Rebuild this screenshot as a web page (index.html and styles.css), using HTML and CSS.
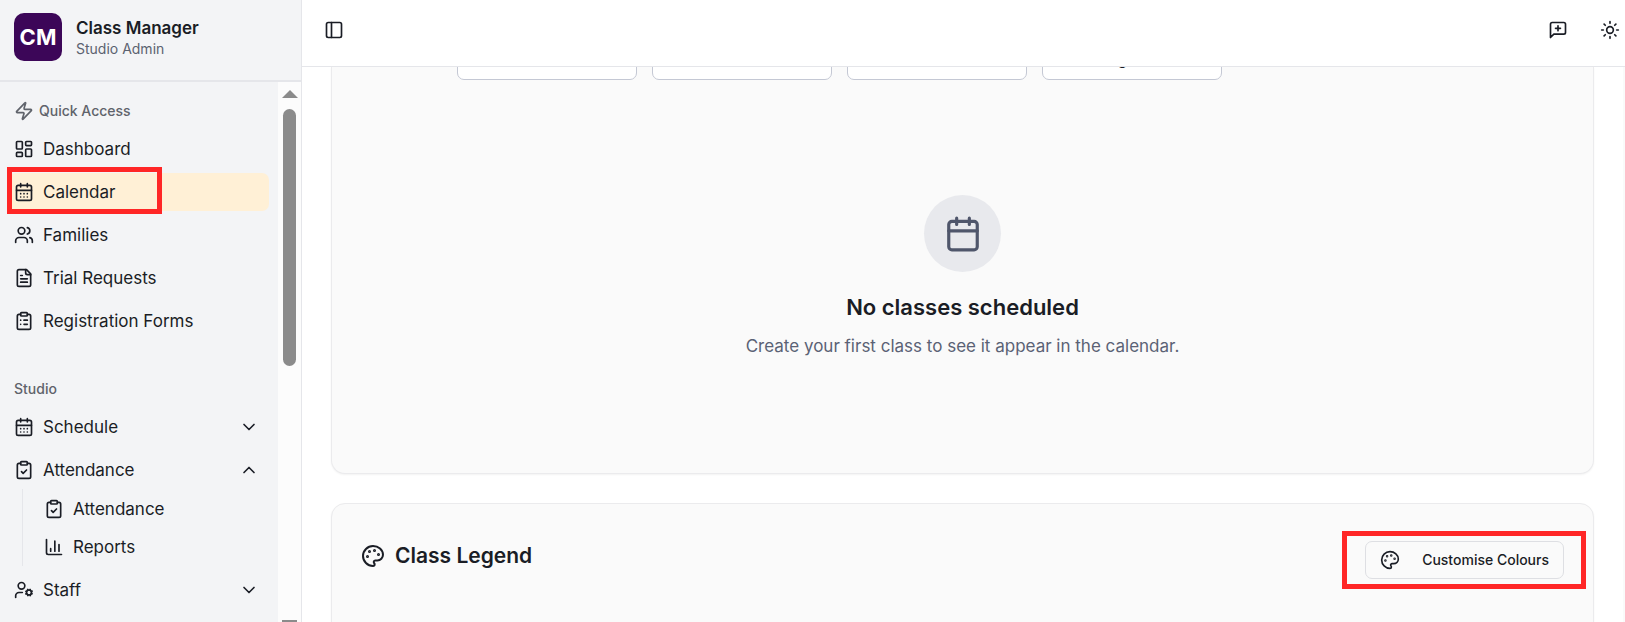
FILE: index.html
```html
<!DOCTYPE html>
<html lang="en">
<head>
<meta charset="utf-8">
<meta name="viewport" content="width=device-width, initial-scale=1">
<title>Class Manager</title>
<link rel="stylesheet" href="styles.css">
</head>
<body>
<svg class="sprite" aria-hidden="true">
  <symbol id="zap" viewBox="0 0 24 24"><path d="M4 14a1 1 0 0 1-.78-1.63l9.9-10.2a.5.5 0 0 1 .86.46l-1.92 6.02A1 1 0 0 0 13 10h7a1 1 0 0 1 .78 1.63l-9.9 10.2a.5.5 0 0 1-.86-.46l1.92-6.02A1 1 0 0 0 11 14z"/></symbol>
  <symbol id="dashboard" viewBox="0 0 24 24"><rect width="7" height="9" x="3" y="3" rx="1"/><rect width="7" height="5" x="14" y="3" rx="1"/><rect width="7" height="9" x="14" y="12" rx="1"/><rect width="7" height="5" x="3" y="16" rx="1"/></symbol>
  <symbol id="calendar" viewBox="0 0 24 24"><path d="M8 2v4M16 2v4M3 10h18"/><rect width="18" height="18" x="3" y="4" rx="2"/></symbol>
  <symbol id="calendar-days" viewBox="0 0 24 24"><path d="M8 2v4M16 2v4M3 10h18M8 14h.01M12 14h.01M16 14h.01M8 18h.01M12 18h.01M16 18h.01"/><rect width="18" height="18" x="3" y="4" rx="2"/></symbol>
  <symbol id="users" viewBox="0 0 24 24"><path d="M16 21v-2a4 4 0 0 0-4-4H6a4 4 0 0 0-4 4v2M22 21v-2a4 4 0 0 0-3-3.87M16 3.13a4 4 0 0 1 0 7.75"/><circle cx="9" cy="7" r="4"/></symbol>
  <symbol id="file-text" viewBox="0 0 24 24"><path d="M15 2H6a2 2 0 0 0-2 2v16a2 2 0 0 0 2 2h12a2 2 0 0 0 2-2V7Z"/><path d="M14 2v4a2 2 0 0 0 2 2h4M10 9H8M16 13H8M16 17H8"/></symbol>
  <symbol id="clipboard-list" viewBox="0 0 24 24"><rect width="8" height="4" x="8" y="2" rx="1"/><path d="M16 4h2a2 2 0 0 1 2 2v14a2 2 0 0 1-2 2H6a2 2 0 0 1-2-2V6a2 2 0 0 1 2-2h2M12 11h4M12 16h4M8 11h.01M8 16h.01"/></symbol>
  <symbol id="clipboard-check" viewBox="0 0 24 24"><rect width="8" height="4" x="8" y="2" rx="1"/><path d="M16 4h2a2 2 0 0 1 2 2v14a2 2 0 0 1-2 2H6a2 2 0 0 1-2-2V6a2 2 0 0 1 2-2h2M9 14l2 2 4-4"/></symbol>
  <symbol id="chart" viewBox="0 0 24 24"><path d="M3 3v16a2 2 0 0 0 2 2h16M18 17V9M13 17V5M8 17v-3"/></symbol>
  <symbol id="user-cog" viewBox="0 0 24 24"><path d="M10 15H6a4 4 0 0 0-4 4v2M14.3 16.6l1-.4M15.2 13.9l-.9-.3M16.6 18.7l.3-.9M19.1 12.2l.3-.9M19.6 18.7l-.4-1M16.8 12.3l-.4-1M20.7 13.8l1-.4M21.7 16.4l-.9-.3"/><circle cx="9" cy="7" r="4"/><circle cx="18" cy="15" r="3"/></symbol>
  <symbol id="chevron-down" viewBox="0 0 24 24"><path d="m6 9 6 6 6-6"/></symbol>
  <symbol id="chevron-up" viewBox="0 0 24 24"><path d="m18 15-6-6-6 6"/></symbol>
  <symbol id="panel-left" viewBox="0 0 24 24"><rect width="18" height="18" x="3" y="3" rx="2"/><path d="M9 3v18"/></symbol>
  <symbol id="message-plus" viewBox="0 0 24 24"><path d="M21 15a2 2 0 0 1-2 2H7l-4 4V5a2 2 0 0 1 2-2h14a2 2 0 0 1 2 2zM12 7v6M9 10h6"/></symbol>
  <symbol id="sun" viewBox="0 0 24 24"><circle cx="12" cy="12" r="4"/><path d="M12 2v2M12 20v2M4.93 4.93l1.41 1.41M17.66 17.66l1.41 1.41M2 12h2M20 12h2M6.34 17.66l-1.41 1.41M19.07 4.93l-1.41 1.41"/></symbol>
  <symbol id="palette" viewBox="0 0 24 24"><g fill="currentColor"><circle cx="13.5" cy="6.5" r=".5"/><circle cx="17.5" cy="10.5" r=".5"/><circle cx="8.5" cy="7.5" r=".5"/><circle cx="6.5" cy="12.5" r=".5"/></g><path d="M12 2C6.5 2 2 6.5 2 12s4.5 10 10 10c.926 0 1.648-.746 1.648-1.688 0-.437-.18-.835-.437-1.125-.29-.289-.438-.652-.438-1.125a1.64 1.64 0 0 1 1.668-1.668h1.996c3.051 0 5.555-2.503 5.555-5.554C21.965 6.012 17.461 2 12 2z"/></symbol>
</svg>

<div class="app">
  <aside class="sidebar">
    <div class="brand">
      <div class="brand-logo">CM</div>
      <div>
        <div class="brand-name">Class Manager</div>
        <div class="brand-role">Studio Admin</div>
      </div>
    </div>
    <div class="sidebar-body">
      <nav class="nav">
        <h2 class="nav-label"><svg class="icon"><use href="#zap"/></svg>Quick Access</h2>
        <ul class="nav-list">
          <li><a class="nav-item" href="#"><svg class="icon"><use href="#dashboard"/></svg>Dashboard</a></li>
          <li class="marked"><a class="nav-item active" href="#"><svg class="icon"><use href="#calendar-days"/></svg>Calendar</a><span class="marker marker-nav"></span></li>
          <li><a class="nav-item" href="#"><svg class="icon"><use href="#users"/></svg>Families</a></li>
          <li><a class="nav-item" href="#"><svg class="icon"><use href="#file-text"/></svg>Trial Requests</a></li>
          <li><a class="nav-item" href="#"><svg class="icon"><use href="#clipboard-list"/></svg>Registration Forms</a></li>
        </ul>
        <h2 class="nav-label nav-label-studio">Studio</h2>
        <ul class="nav-list">
          <li><button class="nav-item" type="button"><svg class="icon"><use href="#calendar-days"/></svg>Schedule<svg class="icon chevron"><use href="#chevron-down"/></svg></button></li>
          <li>
            <button class="nav-item" type="button" aria-expanded="true"><svg class="icon"><use href="#clipboard-check"/></svg>Attendance<svg class="icon chevron"><use href="#chevron-up"/></svg></button>
            <ul class="subnav">
              <li><a class="nav-item" href="#"><svg class="icon"><use href="#clipboard-check"/></svg>Attendance</a></li>
              <li><a class="nav-item" href="#"><svg class="icon"><use href="#chart"/></svg>Reports</a></li>
            </ul>
          </li>
          <li><button class="nav-item" type="button"><svg class="icon"><use href="#user-cog"/></svg>Staff<svg class="icon chevron"><use href="#chevron-down"/></svg></button></li>
        </ul>
      </nav>
      <div class="scrollbar" aria-hidden="true">
        <span class="arrow arrow-up"></span>
        <span class="thumb"></span>
        <span class="arrow arrow-down"></span>
      </div>
    </div>
  </aside>

  <div class="page">
    <header class="topbar">
      <button class="icon-button" type="button" aria-label="Toggle sidebar"><svg class="icon"><use href="#panel-left"/></svg></button>
      <div class="topbar-actions">
        <button class="icon-button" type="button" aria-label="Send feedback"><svg class="icon"><use href="#message-plus"/></svg></button>
        <button class="icon-button" type="button" aria-label="Toggle theme"><svg class="icon"><use href="#sun"/></svg></button>
      </div>
    </header>
    <main class="content">
      <section class="card card-calendar">
        <div class="days">
          <div class="day"></div>
          <div class="day"></div>
          <div class="day"></div>
          <div class="day">g</div>
        </div>
        <div class="empty">
          <div class="empty-icon"><svg class="icon"><use href="#calendar"/></svg></div>
          <h3 class="empty-title">No classes scheduled</h3>
          <p class="empty-text">Create your first class to see it appear in the calendar.</p>
        </div>
      </section>
      <section class="card card-legend">
        <h3 class="legend-title"><svg class="icon"><use href="#palette"/></svg>Class Legend</h3>
        <div class="marked">
          <button class="customise" type="button"><svg class="icon"><use href="#palette"/></svg>Customise Colours</button>
          <span class="marker marker-button"></span>
        </div>
      </section>
    </main>
  </div>
</div>
</body>
</html>
```
FILE: styles.css
```css
* {
  box-sizing: border-box;
}

body {
  margin: 0;
  font-family: Inter, "Liberation Sans", sans-serif;
  font-size: 17px;
  line-height: 24px;
  color: #1a1d25;
  background: #fff;
}

h2, h3, p, ul {
  margin: 0;
  padding: 0;
}

ul {
  list-style: none;
}

button {
  font: inherit;
  color: inherit;
  background: none;
  border: 0;
  padding: 0;
}

.sprite {
  display: none;
}

.icon {
  width: 20px;
  height: 20px;
  flex: none;
  fill: none;
  stroke: currentColor;
  stroke-width: 2;
  stroke-linecap: round;
  stroke-linejoin: round;
}

.app {
  display: flex;
  height: 100vh;
  overflow: hidden;
}

/* Sidebar */
.sidebar {
  width: 302px;
  flex: none;
  display: flex;
  flex-direction: column;
  background: #f3f4f6;
  border-right: 1px solid #e5e6ea;
}

.brand {
  display: flex;
  align-items: center;
  gap: 14px;
  padding: 13px 14px 19px;
  border-bottom: 2px solid #e5e6ea;
}

.brand-logo {
  display: grid;
  place-items: center;
  width: 48px;
  height: 48px;
  border-radius: 10px;
  background: #3c0658;
  color: #fff;
  font-size: 22px;
  font-weight: 700;
}

.brand-name {
  padding-top: 2px;
  font-weight: 600;
  line-height: 22px;
}

.brand-role {
  font-size: 14px;
  line-height: 20px;
  color: #5b6270;
}

.sidebar-body {
  flex: 1;
  min-height: 0;
  display: flex;
}

.nav {
  flex: 1;
  padding: 10px 9px;
  overflow: hidden;
}

.nav-label {
  display: flex;
  align-items: center;
  gap: 5px;
  height: 38px;
  padding: 0 5px;
  font-size: 14px;
  font-weight: 500;
  color: #5f636b;
}

.nav-label-studio {
  margin-top: 30px;
}

.nav-list {
  display: flex;
  flex-direction: column;
  gap: 5px;
}

.nav-item {
  display: flex;
  align-items: center;
  gap: 9px;
  width: 100%;
  height: 38px;
  padding: 0 5px;
  border-radius: 7px;
  color: inherit;
  text-decoration: none;
}

.nav-item.active {
  background: #fff0d6;
}

.chevron {
  margin-left: auto;
  margin-right: 5px;
}

.subnav {
  margin-left: 13px;
  padding: 1px 0 0 16px;
  border-left: 1px solid #e5e6ea;
}

.scrollbar {
  width: 23px;
  display: flex;
  flex-direction: column;
  align-items: center;
  padding-top: 8px;
  background: #fcfcfc;
}

.arrow {
  border: 8px solid transparent;
}

.arrow-up {
  border-top: 0;
  border-bottom-color: #8b8b8b;
}

.arrow-down {
  margin-top: auto;
  height: 2px;
  border: 0;
  width: 15px;
  background: #8b8b8b;
}

.thumb {
  width: 13px;
  height: 257px;
  margin-top: 11px;
  border-radius: 7px;
  background: #8b8b8b;
}

/* Highlight frames */
.marked {
  position: relative;
}

.marker {
  position: absolute;
  border: 5px solid #ff2626;
  pointer-events: none;
}

.marker-nav {
  top: -6px;
  left: -2px;
  width: 155px;
  height: 47px;
}

.marker-button {
  inset: -10px -22px -10px -23px;
}

/* Page */
.page {
  flex: 1;
  min-width: 0;
  display: flex;
  flex-direction: column;
}

.topbar {
  display: flex;
  justify-content: space-between;
  flex: none;
  padding: 20px 5px 26px 22px;
  border-bottom: 1px solid #e5e6ea;
}

.topbar-actions {
  display: flex;
  gap: 32px;
}

.icon-button {
  display: flex;
}

.content {
  flex: 1;
  min-height: 0;
  overflow: hidden;
  padding: 0 29px;
  border-right: 2px solid #fafafa;
}

.card {
  background: #fafafa;
  border: 1px solid #ebebed;
  border-radius: 14px;
  box-shadow: 0 1px 2px rgba(0, 0, 0, 0.05);
}

.card-calendar {
  border-top: 0;
  border-radius: 0 0 14px 14px;
}

.days {
  display: flex;
  align-items: flex-end;
  gap: 15px;
  height: 13px;
  padding-left: 125px;
  overflow: hidden;
}

.day {
  width: 180px;
  height: 60px;
  padding: 25px 74px;
  border: 1px solid #c4c8d4;
  border-radius: 7px;
  background: #fff;
}

.empty {
  display: flex;
  flex-direction: column;
  align-items: center;
  padding: 115px 29px 115px;
}

.empty-icon {
  display: grid;
  place-items: center;
  width: 77px;
  height: 77px;
  border-radius: 50%;
  background: #e8e9ed;
  color: #4f566b;
}

.empty-icon .icon {
  width: 38px;
  height: 38px;
}

.empty-title {
  margin-top: 19px;
  font-size: 22px;
  line-height: 32px;
  font-weight: 600;
}

.empty-text {
  margin-top: 11px;
  color: #5b6275;
}

.card-legend {
  display: flex;
  justify-content: space-between;
  align-items: center;
  height: 200px;
  margin-top: 29px;
  padding: 0 29px 87px;
}

.legend-title {
  display: flex;
  align-items: center;
  gap: 10px;
  padding-bottom: 8px;
  font-size: 21px;
  line-height: 24px;
  font-weight: 600;
}

.legend-title .icon {
  width: 24px;
  height: 24px;
}

.customise {
  display: flex;
  align-items: center;
  gap: 22px;
  height: 38px;
  padding: 0 14px;
  border: 1px solid #dedfe3;
  border-radius: 7px;
  font-size: 14px;
  font-weight: 500;
}
```
